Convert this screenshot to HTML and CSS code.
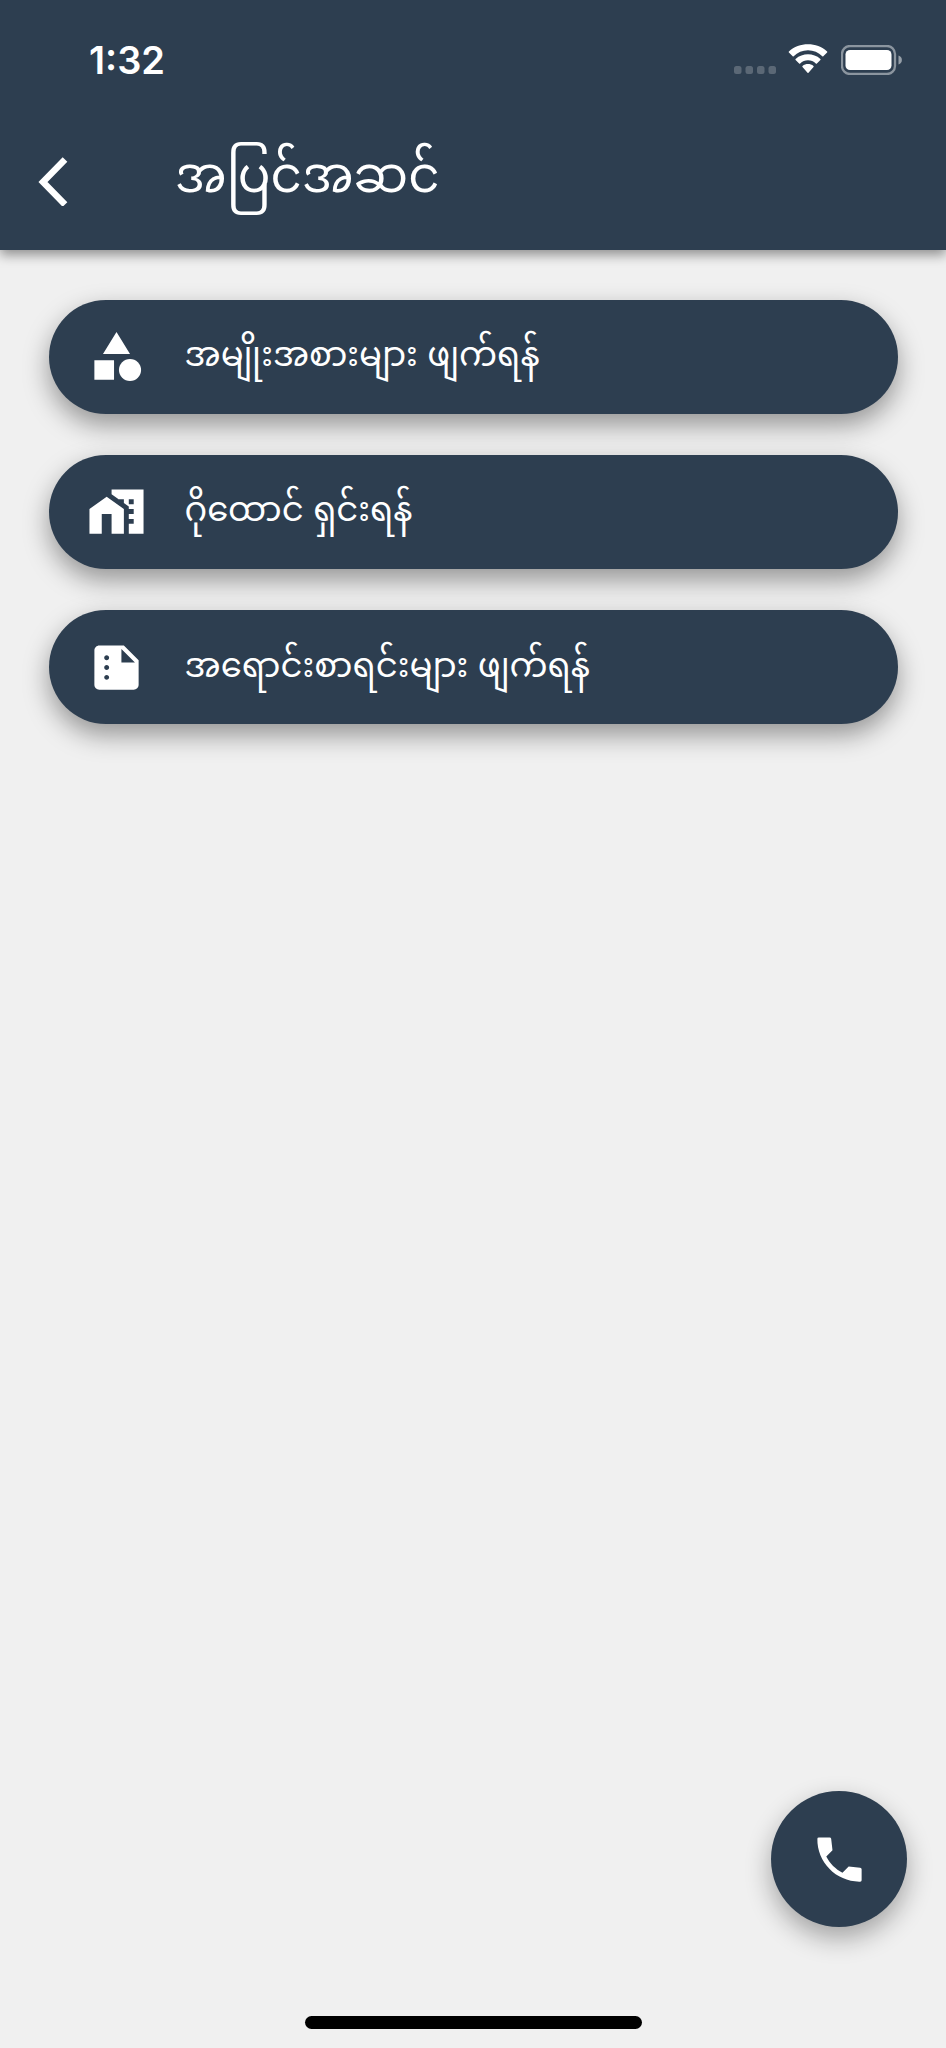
FILE: index.html
```html
<!DOCTYPE html>
<html lang="my"><head><meta charset="utf-8"><title>အပြင်အဆင်</title><link rel="stylesheet" href="styles.css"></head>
<body>
<header class="top">
<div class="status"><span class="time">1:32</span>
<div class="indicators">
<svg class="dots" width="42" height="8" viewBox="0 0 42 8"><rect width="7.500" height="8" rx="2.500"/><rect x="11.500" width="7.500" height="8" rx="2.500"/><rect x="23" width="7.500" height="8" rx="2.500"/><rect x="34.500" width="7.500" height="8" rx="2.500"/></svg>
<svg class="wifi" width="40" height="30" viewBox="0 0 40 29" preserveAspectRatio="none"><path d="M20 6c5.500 0 10.500 2.100 14.300 5.800.3.300.8.300 1 0l3.800-3.500c.3-.3.3-.8 0-1.100C29-2 11-2 .9 7.200c-.3.300-.3.800 0 1.100l3.800 3.500c.2.300.7.300 1 0C9.500 8.100 14.500 6 20 6z"/><path d="M20 15.800c3 0 5.600 1.100 7.800 3 .3.300.8.300 1.100 0l3.500-3.300c.3-.3.300-.8 0-1.100-7-6-17.800-6-24.800 0-.3.300-.3.800 0 1.100l3.500 3.300c.3.300.8.300 1.100 0 2.200-1.900 4.800-3 7.800-3z"/><path d="M25.500 22.300c.3-.3.300-.8 0-1.100-3.200-2.500-7.800-2.500-11 0-.3.300-.3.800 0 1.100l5 5.600c.3.300.7.300 1 0z"/></svg>
<svg class="battery" width="61" height="30" viewBox="0 0 61 30"><rect class="shell" x="1" y="1" width="53" height="28" rx="8"/><rect x="4.500" y="5" width="46" height="20" rx="4.500"/><path class="cap" d="M57.500 10.500v9c4.500-1.500 4.500-7.500 0-9z"/></svg>
</div></div>
<div class="bar"><svg class="back" width="30" height="50" viewBox="0 0 30 50"><path d="M27 3.500 5 26l22 22.500"/></svg><h1>အပြင်အဆင်</h1></div>
</header>
<main class="list">
<button class="item"><svg class="icon" viewBox="0 0 24 24"><path d="m12 2-5.500 9h11zM3 13.500h8v8H3z"/><circle cx="17.500" cy="17.500" r="4.500"/></svg><span>အမျိုးအစားများ ဖျက်ရန်</span></button>
<button class="item"><svg class="icon" viewBox="0 0 24 24"><path d="M1 11v10h5v-8h4v8h5V11L8 6zM10 3v1.970l3 2.140V7h2v1.540l2 1.430V11h2v2h-2v2h2v2h-2v4h6V3H10zm9 6h-2V7h2v2z"/></svg><span>ဂိုထောင် ရှင်းရန်</span></button>
<button class="item"><svg class="icon" viewBox="0 0 24 24"><path d="M15 3H5c-1.100 0-1.990.9-1.990 2L3 19c0 1.100.9 2 2 2h14c1.100 0 2-.9 2-2V9l-6-6zM8 17c-.55 0-1-.45-1-1s.45-1 1-1 1 .45 1 1-.45 1-1 1zm0-4c-.55 0-1-.45-1-1s.45-1 1-1 1 .45 1 1-.45 1-1 1zm0-4c-.55 0-1-.45-1-1s.45-1 1-1 1 .45 1 1-.45 1-1 1zm6 1V4.500l5.500 5.500H14z"/></svg><span>အရောင်းစာရင်းများ ဖျက်ရန်</span></button>
</main>
<button class="call" aria-label="Call"><svg class="icon" viewBox="0 0 24 24"><path d="m20.400 15.390-4.670-.54-2.520 2.520c-2.830-1.440-5.150-3.750-6.590-6.590l2.530-2.530-.54-4.670Q8.540 3 7.960 3H3.630Q3 3 3 3.600C2.800 13.180 10.820 21.200 20.400 21q.6 0 .6-.6v-4.400q0-.54-.6-.61z"/></svg></button>
<div class="home"></div>
</body></html>
```
FILE: styles.css
```css
* { box-sizing: border-box; }
body { margin: 0; height: 2048px; display: flex; flex-direction: column; background: #f0f0f0; font-family: Inter, "Noto Sans Myanmar", "Noto Sans", sans-serif; overflow: hidden; }
svg { fill: #fff; display: block; flex: none; }
.top { height: 250px; background: #2d3e50; color: #fff; box-shadow: 0 5px 11px rgba(0,0,0,.4); }
.status { height: 120px; display: flex; justify-content: space-between; padding: 0 44.500px 0 89px; }
.time { font-size: 38px; font-weight: 600; line-height: 121px; }
.indicators { display: flex; padding-top: 45px; }
.dots { margin: 21px 12px 0 0; opacity: .22; }
.wifi { margin-right: 13px; margin-top: -1px; }
.shell { fill: none; stroke: #fff; stroke-opacity: .45; stroke-width: 2.3; }
.cap { opacity: .5; }
.bar { height: 130px; display: flex; padding: 36px 0 0 38px; }
.back path { fill: none; stroke: #fff; stroke-width: 6.5; }
h1 { margin: -21px 0 0 107px; font-size: 48.400px; font-weight: 400; line-height: 80px; white-space: nowrap; }
.list { display: flex; flex-direction: column; gap: 41.300px; padding: 49.700px 48.500px 0; }
.item { height: 114px; border: 0; border-radius: 57px; background: #2d3e50; color: #fff; display: flex; align-items: center; padding: 0 38px; font: inherit; font-size: 33.900px; box-shadow: 0 11px 26px rgba(0,0,0,.38); }
.icon { width: 59px; height: 59px; }
.item span { margin-left: 39px; padding-top: 3px; white-space: nowrap; }
.call { margin: auto 39px 89px auto; width: 136px; height: 136px; border: 0; border-radius: 50%; background: #2d3e50; display: grid; place-items: center; box-shadow: 0 11px 26px rgba(0,0,0,.32); }
.home { width: 337px; height: 13px; border-radius: 7px; background: #000; margin: 0 auto 19px; }
```
